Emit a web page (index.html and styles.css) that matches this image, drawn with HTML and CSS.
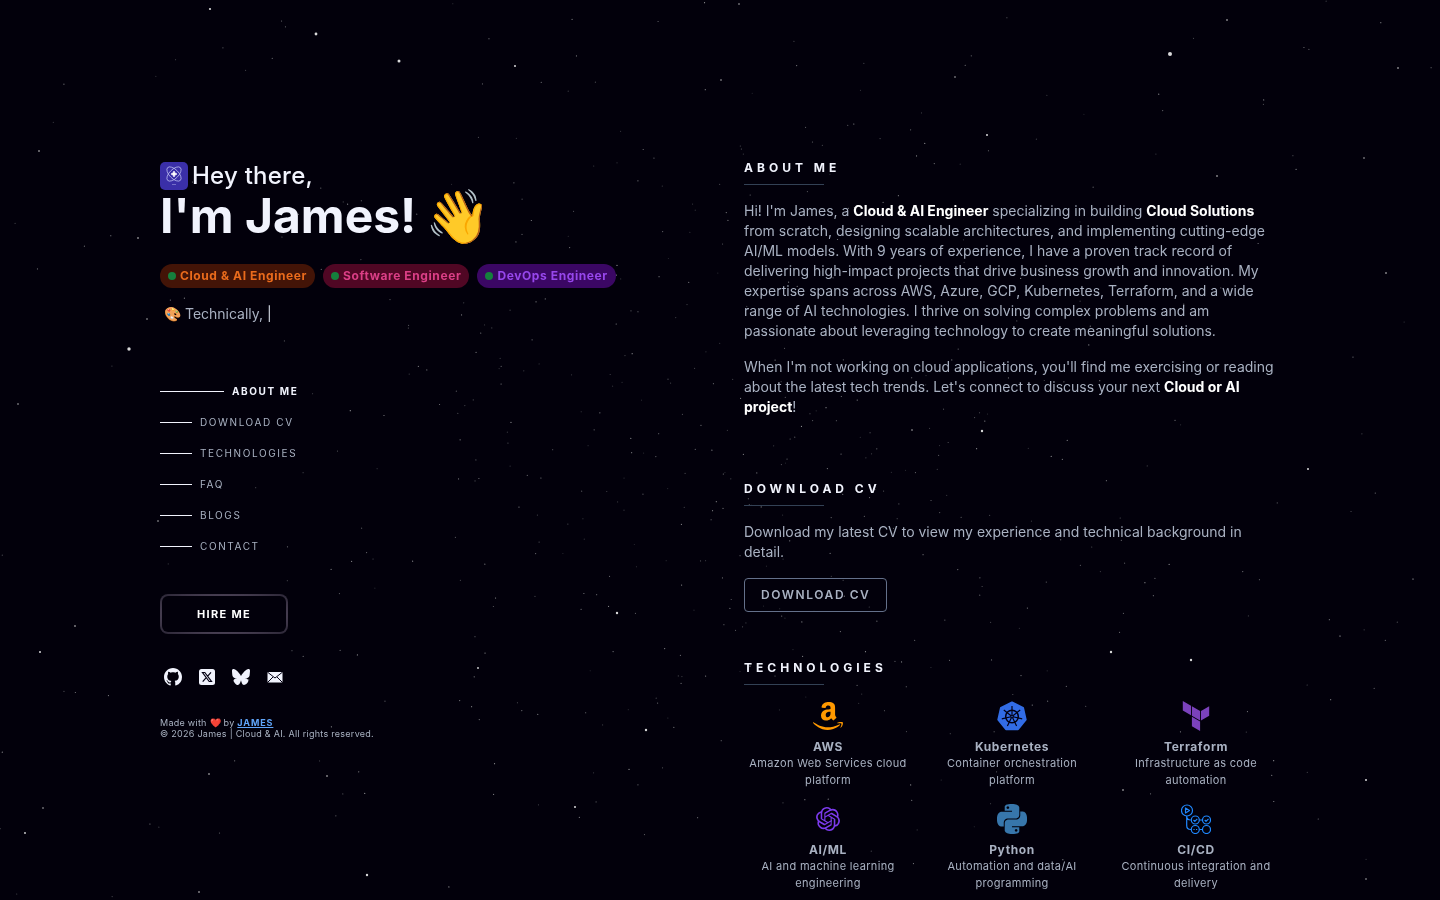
FILE: index.html
```html
<!DOCTYPE html>
<html lang="en">
<head>
  <meta charset="UTF-8">
  <meta name="viewport" content="width=device-width, initial-scale=1.0">
  <title>James | Cloud & AI</title>
  <link rel="stylesheet" href="styles.css">
</head>
<body>
  <canvas id="stars" class="stars"></canvas>

  <div class="container">
    <header class="intro">
      <h1>
        <span class="hello">
          <svg class="logo" viewBox="0 0 28 28" fill="none" stroke="#c7c9f5" stroke-width=".7">
            <rect width="28" height="28" rx="5" fill="#3a2fa8" stroke="none"/>
            <ellipse cx="14" cy="12" rx="9" ry="4.500" transform="rotate(45 14 12)"/>
            <ellipse cx="14" cy="12" rx="9" ry="4.500" transform="rotate(-45 14 12)"/>
            <path d="M14 9l1 2 2 1-2 1-1 2-1-2-2-1 2-1z" fill="#fff" stroke="#fff"/>
            <path d="M12 22.500h4" opacity=".6"/>
          </svg>
          Hey there,
        </span>
        <span class="name">I'm James! <span class="wave">👋</span></span>
      </h1>

      <ul class="badges">
        <li class="badge orange">Cloud &amp; AI Engineer</li>
        <li class="badge pink">Software Engineer</li>
        <li class="badge purple">DevOps Engineer</li>
      </ul>

      <p class="typing">🎨 Technically, <span class="cursor">|</span></p>

      <nav>
        <a href="#about" class="active">About me</a>
        <a href="#cv">Download CV</a>
        <a href="#technologies">Technologies</a>
        <a href="#faq">FAQ</a>
        <a href="#blogs">Blogs</a>
        <a href="#contact">Contact</a>
      </nav>

      <button type="button" class="hire">Hire me</button>

      <div class="social">
        <a href="#github" aria-label="GitHub">
          <svg viewBox="0 0 16 16"><path d="M8 0C3.58 0 0 3.58 0 8c0 3.54 2.29 6.53 5.47 7.59.4.07.55-.17.55-.38 0-.19-.01-.82-.01-1.49-2.01.37-2.53-.49-2.69-.94-.09-.23-.48-.94-.82-1.13-.28-.15-.68-.52-.01-.53.63-.01 1.08.58 1.23.82.72 1.21 1.87.87 2.33.66.07-.52.28-.87.51-1.07-1.78-.2-3.64-.89-3.64-3.95 0-.87.31-1.59.82-2.15-.08-.2-.36-1.02.08-2.12 0 0 .67-.21 2.2.82.64-.18 1.32-.27 2-.27s1.36.09 2 .27c1.53-1.04 2.2-.82 2.2-.82.44 1.1.16 1.92.08 2.12.51.56.82 1.27.82 2.15 0 3.07-1.87 3.75-3.65 3.95.29.25.54.73.54 1.48 0 1.07-.01 1.93-.01 2.2 0 .21.15.46.55.38A8.01 8.01 0 0 0 16 8c0-4.42-3.58-8-8-8"/></svg>
        </a>
        <a href="#x" aria-label="X">
          <svg viewBox="0 0 18 18"><rect x="1" y="1" width="16" height="16" rx="2.500"/><path d="M4.500 4.500h2.300l6.700 9h-2.300zM13 4.300L9.700 8.100M8 9.900l-3.300 3.800" fill="none" stroke="#030014" stroke-width="1.200"/></svg>
        </a>
        <a href="#bluesky" aria-label="Bluesky">
          <svg viewBox="0 1 24 22"><path d="M12 10.800c-1.087-2.114-4.046-6.053-6.798-7.995C2.566.944 1.561 1.266.902 1.565.139 1.908 0 3.080 0 3.768c0 .69.378 5.650.624 6.479.815 2.736 3.713 3.660 6.383 3.364-3.912.58-7.387 2.005-2.830 7.078 5.013 5.190 6.870-1.113 7.823-4.308.953 3.195 2.050 9.271 7.733 4.308 4.267-4.308 1.172-6.498-2.740-7.078 2.670.297 5.568-.628 6.383-3.364.246-.828.624-5.790.624-6.478 0-.69-.139-1.861-.902-2.206-.659-.298-1.664-.62-4.300 1.240C16.046 4.748 13.087 8.687 12 10.800z"/></svg>
        </a>
        <a href="#mail" aria-label="Email">
          <svg viewBox="0 0 18 18"><rect x="1.500" y="4" width="15" height="10.500" rx="1"/><path d="M2 4.500l7 5.500 7-5.500M2 14l5-5M16 14l-5-5" fill="none" stroke="#030014"/></svg>
        </a>
      </div>

      <footer>
        <p>Made with ❤️ by <a href="#james">JAMES</a></p>
        <p>© 2026 James | Cloud &amp; AI. All rights reserved.</p>
      </footer>
    </header>

    <main>
      <section id="about">
        <h2>About me</h2>
        <p>Hi! I'm James, a <b>Cloud &amp; AI Engineer</b> specializing in building <b>Cloud Solutions</b> from scratch, designing scalable architectures, and implementing cutting-edge AI/ML models. With 9 years of experience, I have a proven track record of delivering high-impact projects that drive business growth and innovation. My expertise spans across AWS, Azure, GCP, Kubernetes, Terraform, and a wide range of AI technologies. I thrive on solving complex problems and am passionate about leveraging technology to create meaningful solutions.</p>
        <p>When I'm not working on cloud applications, you'll find me exercising or reading about the latest tech trends. Let's connect to discuss your next <b>Cloud or AI project</b>!</p>
      </section>

      <section id="cv">
        <h2>Download CV</h2>
        <p>Download my latest CV to view my experience and technical background in detail.</p>
        <button type="button" class="download">Download CV</button>
      </section>

      <section id="technologies">
        <h2>Technologies</h2>
        <div class="tech-grid">
          <div class="tech">
            <svg viewBox="0 0 30 30" fill="#ff9900">
              <path transform="translate(3.500 1) scale(1.530)" d="M10.813 11.968c.157.083.36.074.5-.05l.005.005a90 90 0 0 1 1.623-1.405c.173-.143.143-.372.006-.563l-.125-.17c-.345-.465-.673-.906-.673-1.791v-3.300l.001-.335c.008-1.265.014-2.421-.933-3.305C10.404.274 9.060 0 8.030 0 6.017 0 3.770.75 3.296 3.240c-.047.264.143.404.316.443l2.054.22c.19-.009.33-.196.366-.387.176-.857.896-1.271 1.703-1.271.435 0 .929.16 1.188.55.264.39.26.91.257 1.376v.432q-.3.033-.621.065c-1.113.114-2.397.246-3.360.67C3.873 5.910 2.940 7.080 2.940 8.798c0 2.200 1.387 3.298 3.168 3.298 1.506 0 2.328-.354 3.489-1.540l.167.246c.274.405.456.675 1.047 1.166ZM6.030 8.431C6.030 6.627 7.647 6.300 9.177 6.300v.57c.001.776.002 1.434-.396 2.133-.336.595-.87.961-1.465.961-.812 0-1.286-.619-1.286-1.533"/>
              <path transform="translate(0 -2) scale(1.930)" d="M.435 12.174c2.629 1.603 6.698 4.084 13.183.997.28-.116.475.078.199.431C13.538 13.960 11.312 16 7.570 16 3.832 16 .968 13.446.094 12.386c-.24-.275.036-.4.199-.299zM13.828 11.943c.567-.07 1.468-.027 1.645.204.135.176-.004.966-.233 1.533-.23.563-.572.961-.762 1.115s-.333.094-.23-.137c.105-.23.684-1.663.455-1.963-.213-.278-1.177-.177-1.625-.13l-.09.009q-.142.013-.233.024c-.193.021-.245.027-.274-.032-.074-.209.779-.556 1.347-.623"/>
            </svg>
            <h3>AWS</h3>
            <p>Amazon Web Services cloud platform</p>
          </div>
          <div class="tech">
            <svg viewBox="0 0 30 30" fill="none" stroke="#030014">
              <path d="M15 1.500l11 5.300 2.700 11.900L21 28.200H9L1.300 18.700 4 6.800z" fill="#326ce5" stroke="#326ce5" stroke-width="2" stroke-linejoin="round"/>
              <circle cx="15" cy="15.500" r="6.300" stroke-width="1.500"/>
              <circle cx="15" cy="15.500" r="1.500" fill="#030014" stroke="none"/>
              <path d="M15 15.500V5M15 15.500l8.200-6.500M15 15.500l10.200 2.300M15 15.500l4.600 9.500M15 15.500l-4.600 9.500M15 15.500L4.800 17.800M15 15.500L6.800 9" stroke-width="1.200"/>
              <circle cx="15" cy="15.500" r=".7" fill="#326ce5" stroke="none"/>
            </svg>
            <h3>Kubernetes</h3>
            <p>Container orchestration platform</p>
          </div>
          <div class="tech">
            <svg viewBox="0 0 24 24" fill="#7b42bc"><path d="M1.440 0v7.575l6.561 3.790V3.787zm21.120 4.227l-6.561 3.791v7.574l6.560-3.787zM8.720 4.230v7.575l6.561 3.787V8.018zm0 8.405v7.575L15.280 24v-7.578z"/></svg>
            <h3>Terraform</h3>
            <p>Infrastructure as code automation</p>
          </div>
          <div class="tech">
            <svg viewBox="-3 -3 30 30" fill="#7c3aed"><path d="M22.282 9.821a5.985 5.985 0 0 0-.516-4.910 6.046 6.046 0 0 0-6.510-2.900A6.065 6.065 0 0 0 4.981 4.182a5.985 5.985 0 0 0-3.998 2.900 6.046 6.046 0 0 0 .743 7.097 5.980 5.980 0 0 0 .511 4.911 6.051 6.051 0 0 0 6.515 2.900A5.985 5.985 0 0 0 13.260 24a6.056 6.056 0 0 0 5.772-4.206 5.990 5.990 0 0 0 3.998-2.900 6.056 6.056 0 0 0-.748-7.073zM13.260 22.430a4.476 4.476 0 0 1-2.876-1.040l.141-.081 4.779-2.758a.795.795 0 0 0 .393-.681v-6.737l2.020 1.169a.071.071 0 0 1 .038.052v5.583a4.504 4.504 0 0 1-4.495 4.493zM3.600 18.304a4.470 4.470 0 0 1-.535-3.014l.142.085 4.783 2.759a.771.771 0 0 0 .781 0l5.843-3.369v2.332a.080.080 0 0 1-.033.062L9.740 19.950a4.500 4.500 0 0 1-6.140-1.646zM2.341 7.896a4.485 4.485 0 0 1 2.366-1.973V11.600a.766.766 0 0 0 .388.677l5.815 3.354-2.020 1.169a.076.076 0 0 1-.071 0l-4.830-2.787A4.504 4.504 0 0 1 2.341 7.872zm16.597 3.855l-5.833-3.387L15.119 7.200a.076.076 0 0 1 .071 0l4.830 2.791a4.494 4.494 0 0 1-.677 8.105v-5.678a.79.79 0 0 0-.405-.667zm2.010-3.023l-.141-.085-4.774-2.782a.776.776 0 0 0-.785 0L9.409 9.230V6.897a.066.066 0 0 1 .028-.061l4.830-2.787a4.499 4.499 0 0 1 6.681 4.660zM8.307 12.863l-2.020-1.164a.080.080 0 0 1-.038-.057V6.074a4.499 4.499 0 0 1 7.376-3.453l-.142.080L8.704 5.459a.795.795 0 0 0-.393.681zm1.097-2.365l2.602-1.500 2.607 1.500v2.999l-2.597 1.500-2.607-1.500z"/></svg>
            <h3>AI/ML</h3>
            <p>AI and machine learning engineering</p>
          </div>
          <div class="tech">
            <svg viewBox="0 0 24 24" fill="#3776ab"><path d="M14.250.18l.9.200.73.260.59.300.45.320.34.340.25.340.16.330.100.300.040.260.020.200-.010.130V8.500l-.050.630-.130.550-.210.460-.260.380-.300.310-.330.250-.350.190-.350.140-.330.100-.300.070-.260.040-.210.020H8.770l-.690.050-.590.140-.500.220-.410.270-.330.320-.270.350-.200.360-.150.370-.100.350-.070.320-.040.270-.020.210v3.060H3.170l-.210-.030-.280-.070-.320-.120-.350-.180-.360-.260-.360-.360-.350-.460-.320-.590-.280-.730-.210-.880-.140-1.050-.050-1.230.060-1.220.160-1.040.240-.870.320-.710.360-.570.400-.440.420-.330.420-.240.400-.160.360-.100.320-.050.240-.010h.160l.060.010h8.160v-.830H6.180l-.010-2.750-.020-.370.050-.340.110-.310.170-.280.250-.260.310-.230.380-.200.440-.180.510-.150.580-.120.640-.100.710-.060.770-.040.840-.020 1.270.050zm-6.300 1.980l-.230.330-.080.410.080.410.230.340.330.220.410.090.410-.090.330-.220.230-.340.080-.410-.080-.410-.230-.330-.330-.220-.410-.090-.410.090zm13.090 3.950l.280.060.320.120.350.180.360.270.360.350.350.470.320.590.280.730.210.880.140 1.040.050 1.230-.060 1.230-.160 1.040-.240.860-.320.710-.360.570-.400.450-.420.330-.420.240-.400.160-.360.090-.320.050-.240.020-.160-.010h-8.220v.820h5.840l.010 2.760.020.360-.050.340-.110.310-.170.290-.250.250-.310.240-.380.200-.440.170-.510.150-.580.130-.640.090-.710.070-.770.040-.840.010-1.270-.040-1.070-.140-.900-.200-.730-.250-.590-.300-.450-.330-.340-.340-.250-.340-.160-.330-.100-.300-.040-.250-.020-.200.010-.130v-5.340l.050-.640.130-.540.210-.460.260-.380.300-.320.330-.240.350-.200.350-.140.330-.100.300-.060.260-.040.210-.020.130-.010h5.840l.690-.050.590-.140.500-.210.410-.280.330-.320.270-.350.200-.360.150-.360.100-.350.070-.320.040-.280.020-.210V6.070h2.090l.140.010zm-6.470 14.250l-.230.330-.080.410.080.410.230.330.330.230.410.080.410-.080.330-.230.230-.330.080-.410-.080-.410-.230-.330-.330-.230-.410-.080-.410.080z"/></svg>
            <h3>Python</h3>
            <p>Automation and data/AI programming</p>
          </div>
          <div class="tech">
            <svg viewBox="0 0 30 30" fill="none" stroke="#2088ff" stroke-width="1.200" stroke-linejoin="round">
              <circle cx="6" cy="6.500" r="5.500"/>
              <path d="M4.500 4v5l4-2.500zM5.700 12v9.500q0 4 4 4h.5M5.700 12q0 4 4 4M18.500 16h3M18.500 25.500h3"/>
              <circle cx="14.300" cy="16" r="4"/>
              <circle cx="25.500" cy="16" r="4"/>
              <circle cx="14.300" cy="25.500" r="4"/>
              <circle cx="25.500" cy="25.500" r="4"/>
              <path d="M12.500 16l1.300 1.300 2.500-2.500M23.700 16l1.300 1.300 2.500-2.500"/>
              <path d="M12.400 25.500h1.200M15 25.500h1.200"/>
            </svg>
            <h3>CI/CD</h3>
            <p>Continuous integration and delivery</p>
          </div>
        </div>
      </section>
    </main>
  </div>

  <script src="stars.js"></script>
</body>
</html>
```
FILE: styles.css
```css
* {
  box-sizing: border-box;
  margin: 0;
  padding: 0;
}
body {
  background-color: #02000b;
  color: #a9b1c2;
  font-family: Inter, 'Noto Sans', sans-serif;
  font-size: 14px;
  line-height: 20px;
}
.stars {
  position: fixed;
  top: 0;
  left: 0;
  width: 100%;
  height: 100%;
  z-index: -1;
}
.container {
  max-width: 1280px;
  margin: auto;
  padding: 160px 80px 8px;
  display: grid;
  grid-template-columns: 1fr 1fr;
  gap: 48px;
}
h1 {
  color: #f1f3fd;
}
.hello {
  display: flex;
  align-items: center;
  gap: 4px;
  font-size: 24px;
  line-height: 32px;
  font-weight: 500;
  letter-spacing: 0.01em;
}
.logo {
  width: 28px;
  height: 28px;
}
.name {
  display: block;
  font-size: 48px;
  line-height: 48px;
  font-weight: 700;
}
.wave {
  display: inline-block;
  transform: scale(1.1);
}
.badges {
  display: flex;
  gap: 8px;
  margin-top: 24px;
  list-style: none;
}
.badge {
  display: flex;
  align-items: center;
  gap: 4px;
  padding: 4px 8px;
  border-radius: 12px;
  font-size: 12px;
  line-height: 16px;
  font-weight: 700;
  letter-spacing: 0.05em;
  white-space: nowrap;
}
.badge::before {
  content: '';
  width: 8px;
  height: 8px;
  border-radius: 50%;
  background-color: #15803d;
}
.orange {
  background-color: #431407;
  color: #ea6b1c;
}
.pink {
  background-color: #500724;
  color: #db3f86;
}
.purple {
  background-color: #3b0764;
  color: #9747ec;
}
.typing {
  margin: 16px 4px 0;
}
.cursor {
  color: #d3d8e3;
}
nav {
  display: flex;
  flex-direction: column;
  align-items: flex-start;
  gap: 16px;
  margin-top: 60px;
}
nav a {
  display: flex;
  align-items: center;
  gap: 8px;
  color: #a9b1c2;
  font-size: 10px;
  line-height: 15px;
  letter-spacing: 0.16em;
  text-transform: uppercase;
  text-decoration: none;
}
nav a::before {
  content: '';
  width: 32px;
  height: 1px;
  background-color: #f1f3fd;
}
nav a.active {
  color: #f1f3fd;
  font-weight: 700;
}
nav a.active::before {
  width: 64px;
}
.hire {
  display: block;
  width: 128px;
  height: 40px;
  margin-top: 40px;
  border: 2px solid transparent;
  border-radius: 8px;
  background: linear-gradient(#02000b, #02000b) padding-box, radial-gradient(#80708a, #292434) border-box;
  color: #fff;
  font: 700 11px/16px Inter, sans-serif;
  letter-spacing: 0.12em;
  text-transform: uppercase;
  cursor: pointer;
}
.social {
  display: flex;
  gap: 16px;
  margin: 34px 4px 0;
}
.social a {
  height: 18px;
}
.social svg {
  display: block;
  width: 18px;
  height: 18px;
  fill: #f1f3fd;
}
footer {
  margin-top: 31px;
  font-size: 9px;
  line-height: 11px;
  letter-spacing: 0.03em;
}
footer a {
  color: #60a5fa;
  font-weight: 700;
  letter-spacing: 0.1em;
}
section {
  margin-bottom: 64px;
}
#cv {
  margin-bottom: 48px;
}
#technologies {
  margin-bottom: 0;
}
h2 {
  color: #f1f3fd;
  font-size: 12px;
  line-height: 16px;
  letter-spacing: 4px;
  text-transform: uppercase;
}
h2::after {
  content: '';
  display: block;
  width: 80px;
  height: 1px;
  margin-top: 8px;
  background-color: #334155;
}
section > p {
  margin-top: 16px;
}
b {
  color: #fff;
}
.download {
  margin-top: 16px;
  padding: 8px 16px;
  border: 1px solid #64708a;
  border-radius: 4px;
  background: none;
  color: #a9b1c2;
  font: 600 12px/16px Inter, sans-serif;
  letter-spacing: 0.13em;
  text-transform: uppercase;
  cursor: pointer;
}
.tech-grid {
  display: grid;
  grid-template-columns: repeat(3, 1fr);
  gap: 15px 16px;
  margin-top: 16px;
}
.tech {
  text-align: center;
  font-size: 11px;
  line-height: 17px;
  letter-spacing: 0.03em;
}
.tech svg {
  display: block;
  width: 30px;
  height: 30px;
  margin: 0 auto 8px;
}
.tech h3 {
  font-size: 12px;
  line-height: 16px;
  letter-spacing: 0.05em;
}
@media (max-width: 900px) {
  .container {
    grid-template-columns: 1fr;
    padding: 48px 24px;
  }
  .badges {
    flex-wrap: wrap;
  }
}
```
FILE: stars.js
```js
const canvas = document.getElementById('stars');
const ctx = canvas.getContext('2d');

// x, y, radius of the bright ones
const bright = [
  [1170, 54, 2], [399, 61, 1.5], [316, 34, 1.4], [129, 349, 1.7], [210, 9, 1.1], [515, 66, 1],
  [987, 135, 1], [982, 431, 1.2], [617, 613, 1.2], [1111, 652, 1.2], [1191, 660, 1.2], [646, 730, 1.2],
  [367, 875, 1.2], [575, 807, 1], [478, 668, 0.9], [327, 776, 0.8], [209, 774, 0.8], [25, 833, 0.9],
  [40, 652, 1], [1308, 469, 1], [1366, 780, 1], [1217, 176, 0.8], [1123, 790, 0.8], [199, 892, 0.8],
  [1398, 68, 0.8], [39, 151, 0.8], [138, 238, 0.8], [18, 404, 0.7], [1364, 158, 0.7], [1386, 273, 0.8],
  [1227, 20, 0.8], [75, 626, 0.8], [43, 808, 0.7], [1366, 879, 0.7], [739, 4, 0.7], [721, 80, 0.7],
  [955, 77, 0.7], [912, 430, 0.7], [147, 319, 0.7], [158, 521, 0.7], [1340, 636, 0.6], [1413, 579, 0.6]
];

let seed = 7;
function rand() {
  seed = (seed * 16807) % 2147483647;
  return seed / 2147483647;
}

function dot(x, y, r, alpha) {
  ctx.fillStyle = `rgba(255, 255, 255, ${alpha})`;
  ctx.beginPath();
  ctx.arc(x, y, r, 0, Math.PI * 2);
  ctx.fill();
}

function draw() {
  const w = canvas.width = window.innerWidth;
  const h = canvas.height = window.innerHeight;
  seed = 7;
  for (let i = 0; i < 180; i++) {
    dot(rand() * w, rand() * h, 0.6, 0.2 + rand() * 0.4);
  }
  // denser towards the middle
  for (let i = 0; i < 380; i++) {
    const x = w / 2 + (rand() + rand() - 1) * w * 0.35;
    const y = h / 2 + (rand() + rand() - 1) * h * 0.5;
    dot(x, y, 0.6, 0.15 + rand() * 0.4);
  }
  bright.forEach(([x, y, r]) => dot(x / 1440 * w, y / 900 * h, r, 0.85));
}

draw();
window.addEventListener('resize', draw);
```
